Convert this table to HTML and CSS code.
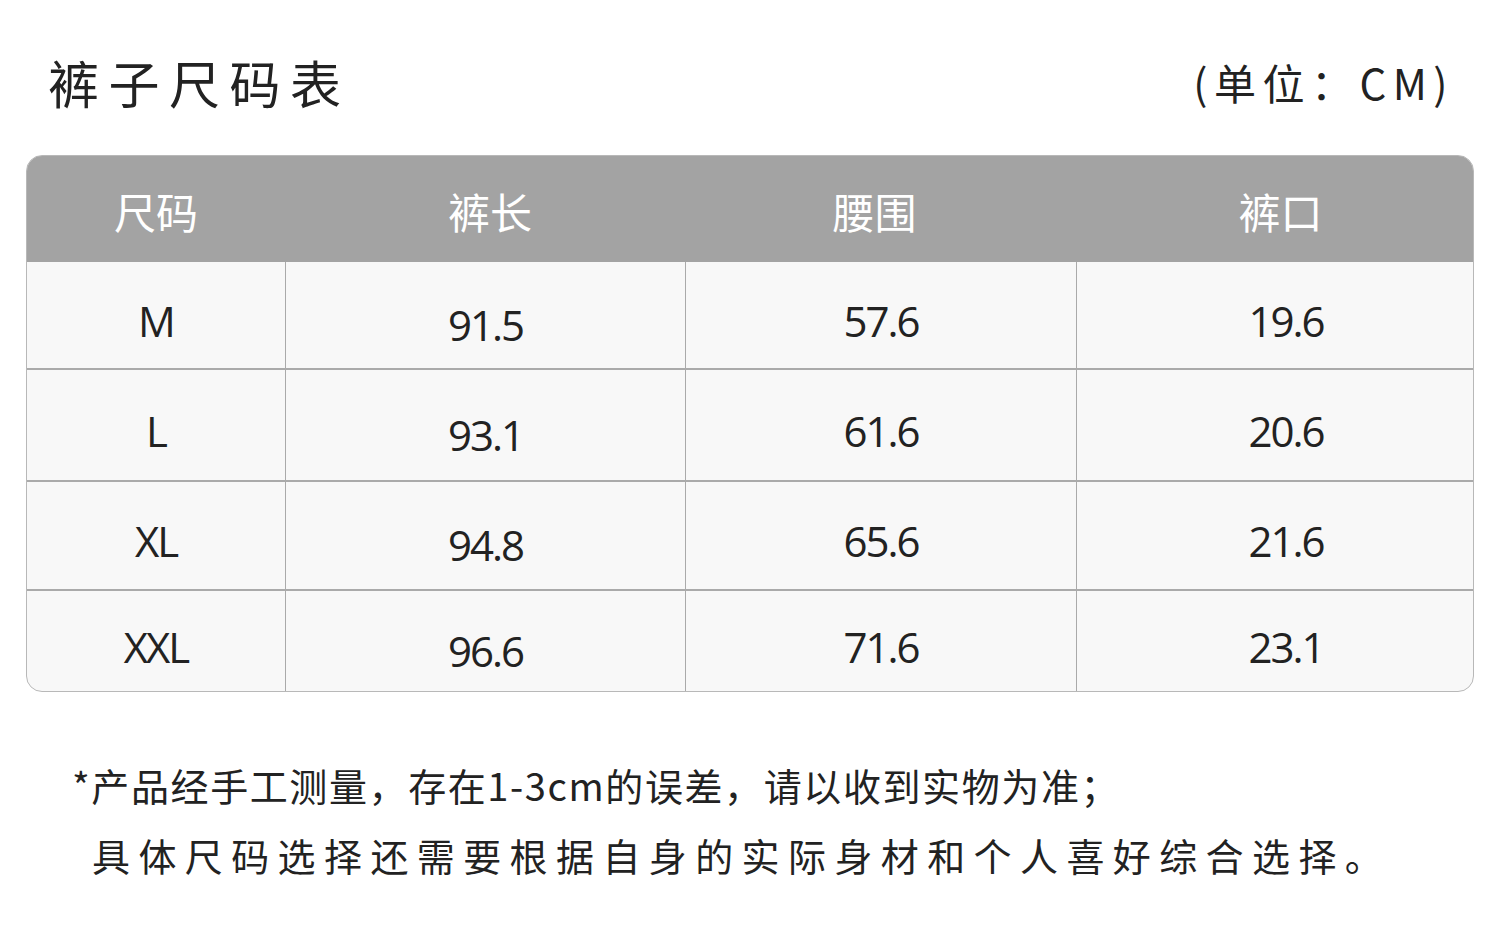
FILE: index.html
```html
<!DOCTYPE html>
<html lang="zh">
<head>
<meta charset="utf-8">
<title>裤子尺码表</title>
<link rel="stylesheet" href="styles.css">
</head>
<body>
<div class="page">
  <div class="top">
    <h1 class="title">裤子尺码表</h1>
    <div class="unit">(单位：CM)</div>
  </div>
  <div class="table">
    <div class="row head">
      <div class="cell">尺码</div>
      <div class="cell c2">裤长</div>
      <div class="cell c3">腰围</div>
      <div class="cell c4">裤口</div>
    </div>
    <div class="row r1">
      <div class="cell">M</div>
      <div class="cell c2">91.5</div>
      <div class="cell c3">57.6</div>
      <div class="cell c4">19.6</div>
    </div>
    <div class="row r2">
      <div class="cell">L</div>
      <div class="cell c2">93.1</div>
      <div class="cell c3">61.6</div>
      <div class="cell c4">20.6</div>
    </div>
    <div class="row r3">
      <div class="cell">XL</div>
      <div class="cell c2">94.8</div>
      <div class="cell c3">65.6</div>
      <div class="cell c4">21.6</div>
    </div>
    <div class="row r4">
      <div class="cell">XXL</div>
      <div class="cell c2">96.6</div>
      <div class="cell c3">71.6</div>
      <div class="cell c4">23.1</div>
    </div>
  </div>
  <div class="notes">
    <p class="note1">*产品经手工测量，存在1-3cm的误差，请以收到实物为准；</p>
    <p class="note2">具体尺码选择还需要根据自身的实际身材和个人喜好综合选择。</p>
  </div>
</div>
</body>
</html>
```

FILE: styles.css
```css
html, body {
  margin: 0;
  padding: 0;
  background: #ffffff;
}
.page {
  width: 1500px;
  height: 937px;
  box-sizing: border-box;
  padding: 46px 0 0 0;
  font-family: "Noto Sans CJK SC", "Noto Sans", sans-serif;
  color: #222;
}
.top {
  display: flex;
  justify-content: space-between;
  align-items: center;
  padding: 0 46px 0 48px;
  height: 72px;
}
.title {
  margin: 0;
  font-size: 51px;
  font-weight: 400;
  letter-spacing: 9.5px;
  line-height: 72px;
}
.unit {
  font-size: 42px;
  letter-spacing: 6.5px;
  line-height: 72px;
  color: #222;
}
.table {
  margin: 37px 26px 0 26px;
  border: 1px solid #b8b8b8;
  border-radius: 16px;
  overflow: hidden;
  background: #f8f8f8;
}
.row {
  display: grid;
  grid-template-columns: 258px 400px 391px 1fr;
}
.cell {
  display: flex;
  align-items: center;
  justify-content: center;
  box-sizing: border-box;
  padding-top: 10px;
  font-family: "Open Sans", "Noto Sans CJK SC", sans-serif;
  font-size: 42px;
  letter-spacing: -2px;
  color: #222;
  border-left: 1.5px solid #aaaaaa;
}
.cell:first-child {
  border-left: none;
  padding-left: 0;
}
.head {
  background: #a3a3a3;
  height: 106px;
}
.head .cell {
  border-left: none;
  color: #ffffff;
  font-family: "Noto Sans CJK SC", sans-serif;
  font-size: 42px;
  letter-spacing: 0;
  padding-top: 2px;
}
.row + .row:not(.r1) {
  border-top: 2px solid #aaaaaa;
}
.r1 { height: 106px; }
.r2 { height: 110px; }
.r3 { height: 107px; }
.r4 { height: 100px; }
.row .c2 {
  padding-top: 18px;
}
.head .c2 {
  padding-top: 2px;
  padding-left: 10px;
}
.head .c3 {
  padding-right: 12px;
}
.row .c4 {
  padding-left: 22px;
}
.head .c4 {
  padding-left: 12px;
}
.notes {
  padding: 58px 0 0 72px;
}
.notes p {
  margin: 0;
  font-size: 38px;
  color: #222;
  line-height: 70px;
}
.note1 {
  letter-spacing: 1.6px;
}
.note2 {
  padding-left: 20px;
  letter-spacing: 8.4px;
}
```
